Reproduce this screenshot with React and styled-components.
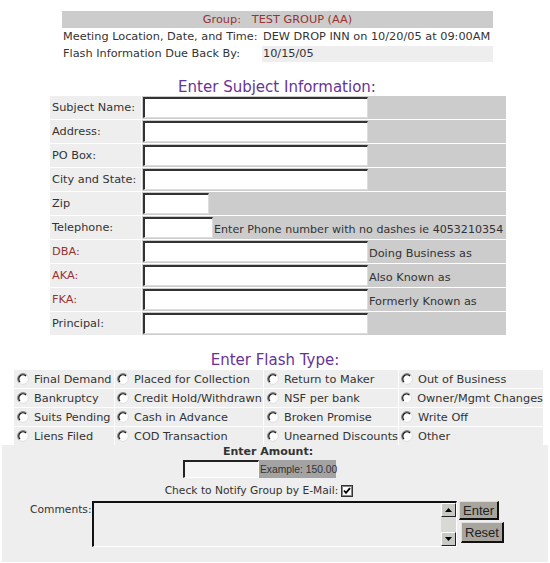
import React from 'react';
import styled, { createGlobalStyle } from 'styled-components';

const GlobalStyle = createGlobalStyle`
  body {
    margin: 0;
    background: #fff;
    font-family: 'DejaVu Sans', Verdana, sans-serif;
    font-size: 11.3px;
    color: #333;
  }
`;

const Page = styled.div`
  width: 550px;
  padding-top: 11px;
`;

const InfoTable = styled.div`
  margin-left: 62px;
  width: 431px;
  display: grid;
  grid-template-columns: 197px 1fr;
  column-gap: 3px;
  row-gap: 1px;
`;

const GroupRow = styled.div`
  grid-column: 1 / 3;
  background: #ccc;
  color: #993333;
  height: 17px;
  line-height: 17px;
  text-align: center;
  white-space: pre;
`;

const InfoCell = styled.div`
  height: 16px;
  line-height: 16px;
  padding-left: 1px;
  white-space: nowrap;
  background: ${p => (p.shaded ? '#eee' : 'transparent')};
`;

const Heading = styled.div`
  text-align: center;
  color: #663399;
  font-size: 15px;
  height: 17px;
  line-height: 17px;
  padding-left: ${p => p.shift || 0}px;
  margin-top: ${p => p.top}px;
`;

const SubjectGrid = styled.div`
  margin-left: 50px;
  width: 456px;
  display: grid;
  grid-template-columns: 91px 1fr;
  column-gap: 1px;
  row-gap: 1px;
`;

const Label = styled.div`
  background: #eee;
  height: 23px;
  line-height: 24px;
  padding-left: 2px;
  color: ${p => (p.red ? '#993333' : '#333')};
  white-space: nowrap;
`;

const FieldCell = styled.div`
  background: #ccc;
  height: 23px;
  display: flex;
  align-items: center;
  white-space: nowrap;
  overflow: hidden;
`;

const TextBox = styled.div`
  box-sizing: border-box;
  width: ${p => p.w}px;
  height: 21px;
  background: #fff;
  border-top: 2px solid #333;
  border-left: 2px solid #333;
  border-right: 1px solid #ddd;
  border-bottom: 1px solid #ddd;
  flex-shrink: 0;
  margin-left: 1px;
`;

const Hint = styled.span`
  margin-left: 1px;
  padding-top: 4px;
  font-size: ${p => (p.small ? '11.1px' : 'inherit')};
`;

const FlashGrid = styled.div`
  margin-left: 14px;
  margin-top: 1px;
  width: 529px;
  display: grid;
  grid-template-columns: 100px 148px 134px 144px;
  gap: 1px;
`;

const FlashCell = styled.div`
  background: #eee;
  height: 18px;
  display: flex;
  align-items: center;
  padding-left: ${p => p.pad}px;
  white-space: nowrap;
  overflow: hidden;
`;

const RadioText = styled.span`
  margin-left: ${p => p.gap}px;
`;

const Bottom = styled.div`
  margin: 0 2px;
  background: #eee;
  height: 117px;
  display: flex;
  flex-direction: column;
  align-items: center;
  font-size: 10.7px;
`;

const BoldTitle = styled.div`
  font-weight: bold;
  font-size: 11px;
  height: 14px;
  line-height: 14px;
  padding-right: 14px;
`;

const AmountRow = styled.div`
  display: flex;
  height: 18px;
  margin-top: 1px;
  padding-right: 31px;
`;

const AmountBox = styled.div`
  box-sizing: border-box;
  width: 76px;
  height: 18px;
  background: #f4f4f4;
  border-top: 2px solid #222;
  border-left: 2px solid #222;
  border-right: 1px solid #fff;
  border-bottom: 1px solid #fff;
`;

const Example = styled.div`
  background: #a3a3a3;
  width: 76px;
  height: 18px;
  line-height: 19px;
  padding-left: 1px;
  white-space: nowrap;
  font-family: 'Liberation Sans', Arial, sans-serif;
  font-size: 10.3px;
`;

const NotifyRow = styled.div`
  display: flex;
  align-items: center;
  gap: 3px;
  margin-top: 6px;
  padding-right: 32px;
`;

const CommentRow = styled.div`
  align-self: flex-start;
  display: flex;
  margin-top: 4px;
  margin-left: 28px;
`;

const CommentLabel = styled.div`
  width: 62px;
  padding-top: 2px;
`;

const CommentBox = styled.div`
  box-sizing: border-box;
  width: 365px;
  height: 46px;
  border-top: 2px solid #111;
  border-left: 2px solid #111;
  border-right: 1px solid #fff;
  border-bottom: 1px solid #fff;
  display: flex;
  background: #eee;
`;

const CommentArea = styled.div`
  flex: 1;
`;

const Scrollbar = styled.div`
  width: 15px;
  background: #d8d8d4;
  display: flex;
  flex-direction: column;
  justify-content: space-between;
`;

const ArrowBox = styled.div`
  box-sizing: border-box;
  width: 15px;
  height: 14px;
  background: #c8c8c4;
  border-top: 1px solid #fff;
  border-left: 1px solid #fff;
  border-right: 1px solid #222;
  border-bottom: 1px solid #222;
  display: flex;
  align-items: center;
  justify-content: center;
`;

const Buttons = styled.div`
  display: flex;
  flex-direction: column;
  align-items: flex-start;
  margin-left: 2px;
  gap: 2px;
`;

const Button = styled.div`
  box-sizing: border-box;
  font-family: 'Liberation Sans', Arial, sans-serif;
  font-size: 13px;
  color: #222;
  background: #a8a59e;
  border-top: 1px solid #e0e0e0;
  border-left: 1px solid #e0e0e0;
  border-right: 2px solid #111;
  border-bottom: 2px solid #111;
  height: ${p => p.h}px;
  padding: 0 3px;
  margin-left: ${p => p.shift || 0}px;
  display: flex;
  align-items: center;
`;

const Radio = () => (
  <svg width="12" height="12" viewBox="0 0 12 12">
    <circle cx="6" cy="6" r="5.5" fill="#fff" />
    <path d="M2.2 9.8 A5 5 0 0 1 9.8 2.2" stroke="#777" strokeWidth="1" fill="none" />
    <path d="M3 9 A4 4 0 0 1 9 3" stroke="#111" strokeWidth="1.2" fill="none" />
    <path d="M9.8 2.2 A5 5 0 0 1 2.2 9.8" stroke="#ddd" strokeWidth="1" fill="none" />
  </svg>
);

const Check = () => (
  <svg width="12" height="12" viewBox="0 0 12 12">
    <rect x="0.5" y="0.5" width="11" height="11" fill="#fff" stroke="#333" />
    <rect x="1.5" y="1.5" width="9" height="9" fill="none" stroke="#888" />
    <path d="M3 5.5 L5 7.8 L9 3.2" stroke="#000" strokeWidth="1.8" fill="none" />
  </svg>
);

const Arrow = ({ down }) => (
  <svg width="7" height="4" viewBox="0 0 7 4">
    <path d={down ? 'M0 0 H7 L3.5 4 Z' : 'M0 4 H7 L3.5 0 Z'} fill="#000" />
  </svg>
);

const subjectRows = [
  { label: 'Subject Name:', w: 225 },
  { label: 'Address:', w: 225 },
  { label: 'PO Box:', w: 225 },
  { label: 'City and State:', w: 225 },
  { label: 'Zip', w: 66 },
  { label: 'Telephone:', w: 70, hint: 'Enter Phone number with no dashes ie 4053210354', small: true },
  { label: 'DBA:', w: 225, red: true, hint: 'Doing Business as' },
  { label: 'AKA:', w: 225, red: true, hint: 'Also Known as' },
  { label: 'FKA:', w: 225, red: true, hint: 'Formerly Known as' },
  { label: 'Principal:', w: 225 },
];

const flashRows = [
  ['Final Demand', 'Placed for Collection', 'Return to Maker', 'Out of Business'],
  ['Bankruptcy', 'Credit Hold/Withdrawn', 'NSF per bank', 'Owner/Mgmt Changes'],
  ['Suits Pending', 'Cash in Advance', 'Broken Promise', 'Write Off'],
  ['Liens Filed', 'COD Transaction', 'Unearned Discounts', 'Other'],
];

const colStyle = [
  { pad: 3, gap: 5 },
  { pad: 2, gap: 5 },
  { pad: 3, gap: 5 },
  { pad: 2, gap: 5 },
];

export default function App() {
  return (
    <Page>
      <GlobalStyle />
      <InfoTable>
        <GroupRow>{'Group:   TEST GROUP (AA)'}</GroupRow>
        <InfoCell>Meeting Location, Date, and Time:</InfoCell>
        <InfoCell>DEW DROP INN on 10/20/05 at 09:00AM</InfoCell>
        <InfoCell>Flash Information Due Back By:</InfoCell>
        <InfoCell shaded>10/15/05</InfoCell>
      </InfoTable>

      <Heading top={17} shift={4}>Enter Subject Information:</Heading>
      <SubjectGrid>
        {subjectRows.map(r => (
          <React.Fragment key={r.label}>
            <Label red={r.red}>{r.label}</Label>
            <FieldCell>
              <TextBox w={r.w} />
              {r.hint && <Hint small={r.small}>{r.hint}</Hint>}
            </FieldCell>
          </React.Fragment>
        ))}
      </SubjectGrid>

      <Heading top={17}>Enter Flash Type:</Heading>
      <FlashGrid>
        {flashRows.map(row =>
          row.map((item, i) => (
            <FlashCell key={item} pad={colStyle[i].pad}>
              <Radio />
              <RadioText gap={colStyle[i].gap}>{item}</RadioText>
            </FlashCell>
          ))
        )}
      </FlashGrid>

      <Bottom>
        <BoldTitle>Enter Amount:</BoldTitle>
        <AmountRow>
          <AmountBox />
          <Example>Example: 150.00</Example>
        </AmountRow>
        <NotifyRow>
          <span>Check to Notify Group by E-Mail:</span>
          <Check />
        </NotifyRow>
        <CommentRow>
          <CommentLabel>Comments:</CommentLabel>
          <CommentBox>
            <CommentArea />
            <Scrollbar>
              <ArrowBox><Arrow /></ArrowBox>
              <ArrowBox><Arrow down /></ArrowBox>
            </Scrollbar>
          </CommentBox>
          <Buttons>
            <Button h={19}>Enter</Button>
            <Button h={21} shift={2}>Reset</Button>
          </Buttons>
        </CommentRow>
      </Bottom>
    </Page>
  );
}
